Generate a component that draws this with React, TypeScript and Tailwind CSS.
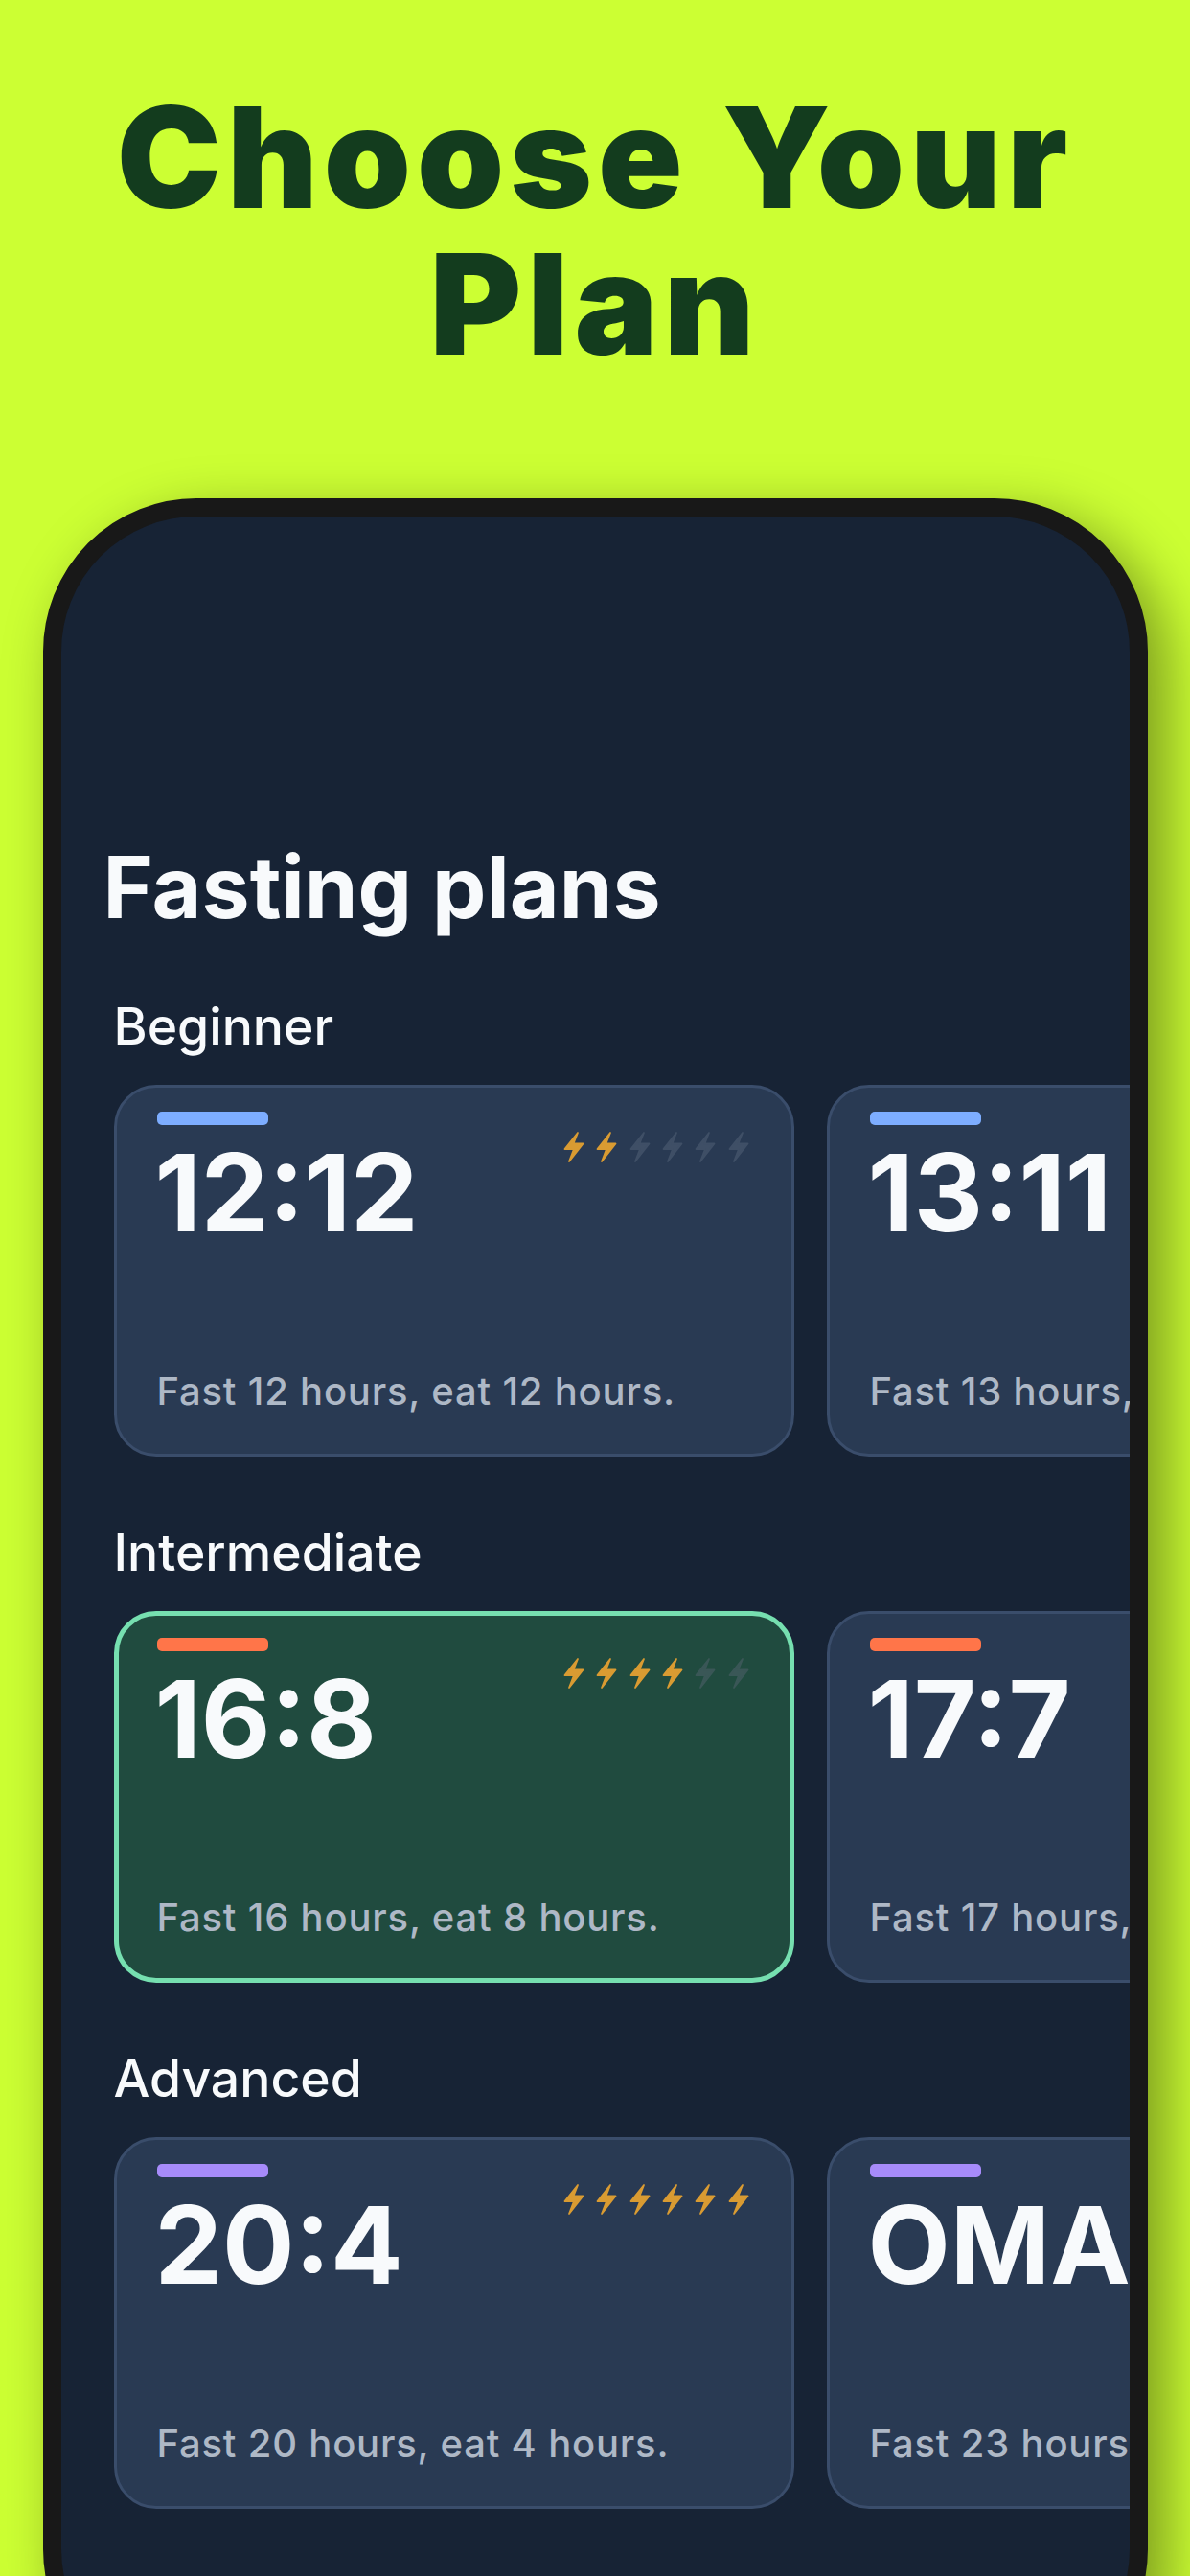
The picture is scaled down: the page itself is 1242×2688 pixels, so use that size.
const font = { fontFamily: "Inter, 'Liberation Sans', sans-serif" };

function Bolt({ color }: { color: string }) {
  return (
    <svg width="22" height="34" viewBox="0 0 22 34" className={color}>
      <path
        d="M15 2 L1.5 19 H11 L6 32 L20.5 13.5 H10.5 Z"
        fill="currentColor"
        stroke="currentColor"
        strokeWidth="1.8"
        strokeLinejoin="round"
      />
    </svg>
  );
}

type Plan = { name: string; desc: string; bolts: number; selected?: boolean };

function Card({ plan, bar }: { plan: Plan; bar: string }) {
  return (
    <div
      className={`w-[710px] h-[388px] shrink-0 rounded-[44px] flex flex-col justify-between ${
        plan.selected
          ? "bg-[#204b3f] border-[5px] border-[#76dfb0] pl-[40px] pr-[42px] pt-[23px] pb-[40px]"
          : "bg-[#293a53] border-[3px] border-[#3a4d6b] pl-[42px] pr-[44px] pt-[25px] pb-[42px]"
      }`}
    >
      <div className="flex justify-between items-start">
        <div>
          <div className={`w-[116px] h-[14px] rounded-[5px] ${bar}`} />
          <div className="text-[112px] leading-[120px] font-bold text-[#f8fafc] whitespace-nowrap mt-[10px] ml-[-2px]">
            {plan.name}
          </div>
        </div>
        <div className="flex gap-[12.3px] mt-[20px]">
          {[0, 1, 2, 3, 4, 5].map((i) => (
            <Bolt
              key={i}
              color={i < plan.bolts ? "text-[#d99b32]" : plan.selected ? "text-[#3a5757]" : "text-[#3f4f66]"}
            />
          ))}
        </div>
      </div>
      <div className="text-[40px] leading-[46px] tracking-[0.8px] font-medium text-[#aeb8c6] whitespace-nowrap">
        {plan.desc}
      </div>
    </div>
  );
}

function Section({ title, bar, plans }: { title: string; bar: string; plans: Plan[] }) {
  return (
    <div className="flex flex-col">
      <div className="text-[53.5px] leading-[60px] font-medium text-[#f8fafc] pl-[55px] mb-[31px]">{title}</div>
      <div className="flex gap-[34px] pl-[55px] overflow-hidden">
        {plans.map((p) => (
          <Card key={p.name} plan={p} bar={bar} />
        ))}
      </div>
    </div>
  );
}

export default function App() {
  return (
    <div className="w-[1242px] h-[2688px] bg-[#ccff33] overflow-hidden flex flex-col items-center" style={font}>
      <div className="h-[520px] shrink-0 pt-[88px] w-full text-center text-[#133c1e] text-[146px] leading-[153px] tracking-[6px] font-black">
        <div>Choose Your</div>
        <div>Plan</div>
      </div>
      <div className="w-[1153px] h-[2300px] shrink-0 rounded-[160px] border-[19px] border-[#181818] bg-[#172335] shadow-[20px_20px_60px_rgba(0,0,0,0.4)] overflow-hidden pt-[334px]">
        <div className="text-[89.5px] leading-[106px] font-bold text-[#f8fafc] pl-[44px] mb-[62px]">Fasting plans</div>
        <div className="flex flex-col gap-[70px]">
          <Section
            title="Beginner"
            bar="bg-[#7dadff]"
            plans={[
              { name: "12:12", desc: "Fast 12 hours, eat 12 hours.", bolts: 2 },
              { name: "13:11", desc: "Fast 13 hours, eat 11 hours.", bolts: 3 },
            ]}
          />
          <Section
            title="Intermediate"
            bar="bg-[#ff7549]"
            plans={[
              { name: "16:8", desc: "Fast 16 hours, eat 8 hours.", bolts: 4, selected: true },
              { name: "17:7", desc: "Fast 17 hours, eat 7 hours.", bolts: 5 },
            ]}
          />
          <Section
            title="Advanced"
            bar="bg-[#a78bfa]"
            plans={[
              { name: "20:4", desc: "Fast 20 hours, eat 4 hours.", bolts: 6 },
              { name: "OMAD", desc: "Fast 23 hours, eat 1 hour.", bolts: 6 },
            ]}
          />
        </div>
      </div>
    </div>
  );
}
